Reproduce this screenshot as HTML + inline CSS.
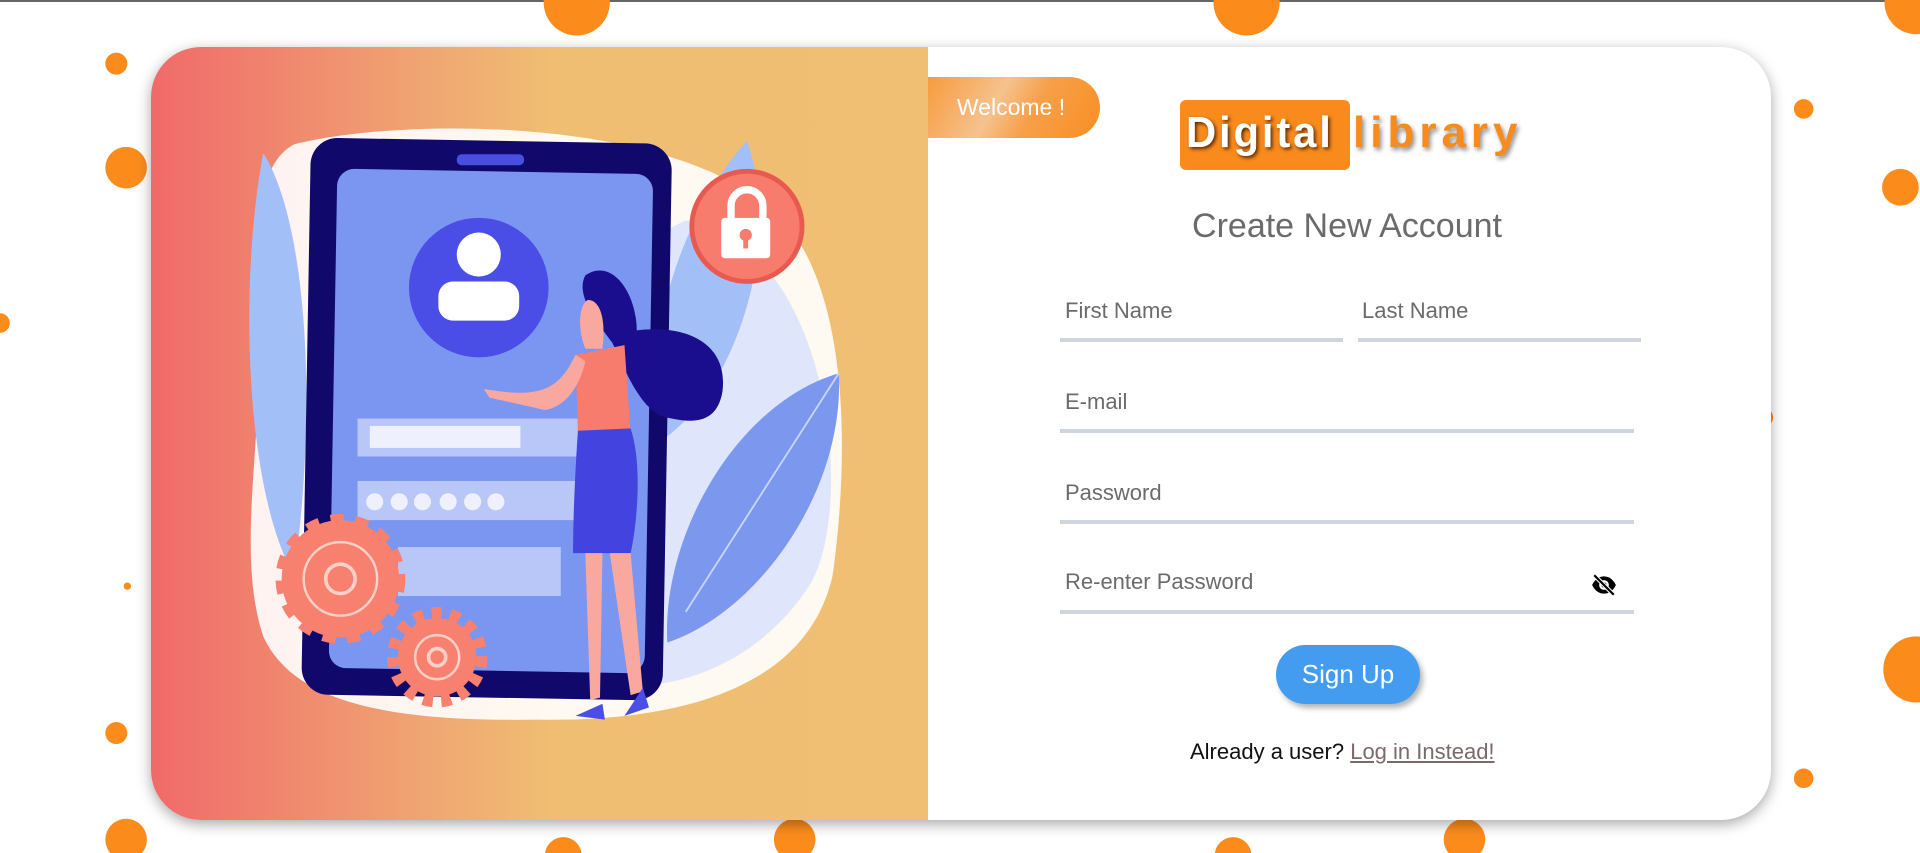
<!DOCTYPE html>
<html><head><meta charset="utf-8"><style>
*{margin:0;padding:0;box-sizing:border-box}
body{width:1920px;height:853px;overflow:hidden;background:#fff;position:relative;font-family:"Liberation Sans",sans-serif}
.full{position:absolute;left:0;top:0;width:1920px;height:853px}
.topline{position:absolute;left:0;top:0;width:1920px;height:2px;background:#666}
.card{position:absolute;left:151px;top:47px;width:1620px;height:773px;border-radius:50px;overflow:hidden;background:#fff;box-shadow:0 4px 14px rgba(0,0,0,.35)}
.left{position:absolute;left:0;top:0;width:777px;height:100%;background:linear-gradient(90deg,#f06a6a 0%,#f0a572 35%,#f0be72 52%,#f0bf73 100%)}
.welcome{position:absolute;left:928px;top:77px;width:172px;height:61px;border-radius:0 31px 31px 0;background:linear-gradient(120deg,#f89b3d 0%,#f5c28e 40%,#f7a04a 60%,#f88e22 100%);color:#fff;font-size:23px;line-height:61px;text-align:center;padding-right:6px}
.logo{position:absolute;left:1180px;top:100px;width:170px;height:70px;border-radius:6px;background:#f98a1c}
.t{position:absolute;white-space:nowrap}
.lbl{font-size:22px;color:#6b6b6b}
.line{position:absolute;height:4px;background:#cfd5dc}
.btn{position:absolute;left:1276px;top:645px;width:144px;height:59px;border-radius:30px;background:#439cf0;color:#fff;font-size:26px;line-height:59px;text-align:center;box-shadow:3px 4px 6px rgba(0,0,0,.3)}
</style></head><body>
<div class="topline"></div>
<svg class="full" viewBox="0 0 1568 697" preserveAspectRatio="none">
<g fill="#fb8c1c">
<circle cx="471" cy="2" r="27"/><circle cx="1018" cy="2" r="27"/><circle cx="1565" cy="2" r="26"/>
<circle cx="95" cy="52" r="9"/><circle cx="103" cy="137" r="17"/><circle cx="1473" cy="89" r="8"/>
<circle cx="1552" cy="153" r="15"/><circle cx="0" cy="264" r="8"/><circle cx="1440" cy="341" r="8"/>
<circle cx="104" cy="479" r="3"/><circle cx="95" cy="599" r="9"/><circle cx="1565" cy="547" r="27"/>
<circle cx="1473" cy="636" r="8"/><circle cx="103" cy="686" r="17"/><circle cx="460" cy="699" r="15"/>
<circle cx="649" cy="686" r="17"/><circle cx="1007" cy="699" r="15"/><circle cx="1196" cy="686" r="17"/>
</g></svg>
<div class="card"><div class="left"></div></div>
<svg class="full" viewBox="0 0 1568 697" preserveAspectRatio="none">
<path d="M240 118 C330 95 560 95 640 180 C700 250 690 400 680 470 C660 560 560 590 440 588 C320 590 240 575 215 520 C195 460 210 380 212 300 C214 220 200 140 240 118Z" fill="#fff" opacity=".9"/>
<path d="M560 180 C680 200 700 420 660 480 C620 540 560 560 520 560 L520 200Z" fill="#dfe6fb"/>
<path d="M215 125 C250 180 260 330 240 470 C200 400 195 230 215 125Z" fill="#a3bff8"/>
<path d="M610 115 C640 200 600 320 540 360 C520 280 560 170 610 115Z" fill="#a3bff8"/>
<path d="M685 305 C690 400 620 500 545 525 C540 440 600 330 685 305Z" fill="#7c97ee"/>
<path d="M685 305 L560 500" stroke="#c9d5fb" stroke-width="1.5"/>
<rect x="250" y="115" width="295" height="455" rx="22" fill="#10086b" transform="rotate(1 400 340)"/>
<rect x="272" y="140" width="258" height="408" rx="14" fill="#7b96f0" transform="rotate(1 400 340)"/>
<rect x="373" y="126" width="55" height="9" rx="4" fill="#4a4ee0"/>
<circle cx="391" cy="235" r="57" fill="#4a4de6"/>
<circle cx="391" cy="208" r="18" fill="#fff"/>
<rect x="358" y="230" width="66" height="32" rx="12" fill="#fff"/>
<rect x="292" y="342" width="183" height="31" fill="#b8c6f8"/>
<rect x="302" y="348" width="123" height="18" fill="#eef1fd"/>
<rect x="292" y="393" width="183" height="32" fill="#b8c6f8"/>
<g fill="#eef1fd"><circle cx="306" cy="410" r="7"/><circle cx="326" cy="410" r="7"/><circle cx="345" cy="410" r="7"/><circle cx="366" cy="410" r="7"/><circle cx="386" cy="410" r="7"/><circle cx="405" cy="410" r="7"/></g>
<rect x="325" y="447" width="133" height="40" fill="#b8c6f8"/>
<circle cx="610" cy="185" r="45" fill="#f87c6d" stroke="#e85a50" stroke-width="4"/>
<path d="M597 180 V168 a13 13 0 0 1 26 0 V180" fill="none" stroke="#fff" stroke-width="6"/>
<rect x="589" y="178" width="40" height="33" rx="3" fill="#fff"/>
<circle cx="609" cy="192" r="5" fill="#f87c6d"/><rect x="607" y="193" width="4" height="10" fill="#f87c6d"/>
<g fill="#f8806e" stroke="#f8806e" stroke-width="14" stroke-dasharray="10 9"><circle cx="278" cy="473" r="46"/></g>
<circle cx="278" cy="473" r="48" fill="#f8806e"/>
<circle cx="278" cy="473" r="30" fill="none" stroke="#fbd0c8" stroke-width="2"/>
<circle cx="278" cy="473" r="12" fill="none" stroke="#fbd0c8" stroke-width="3"/>
<circle cx="357" cy="537" r="36" fill="none" stroke="#f8806e" stroke-width="10" stroke-dasharray="8 7"/>
<circle cx="357" cy="537" r="32" fill="#f8806e"/>
<circle cx="357" cy="537" r="18" fill="none" stroke="#fbd0c8" stroke-width="2"/>
<circle cx="357" cy="537" r="7" fill="none" stroke="#fbd0c8" stroke-width="3"/>
<path d="M478 225 C500 210 520 240 520 270 C560 265 595 280 590 320 C585 350 560 345 540 340 C520 330 510 300 500 280 C485 260 470 240 478 225Z" fill="#1a0e8f"/>
<path d="M480 245 C490 245 495 260 492 285 L478 285 C472 270 472 250 480 245Z" fill="#f9a8a0"/>
<path d="M470 290 L510 282 L515 355 L472 355Z" fill="#f87c6d"/>
<path d="M470 290 C460 310 450 325 410 320 L395 318 L400 325 L445 335 C465 332 475 310 478 295Z" fill="#f9a8a0"/>
<path d="M472 352 L515 350 C525 380 520 430 515 452 L468 452 C468 420 470 380 472 352Z" fill="#4343e0"/>
<path d="M478 452 L492 452 L490 570 L482 572Z" fill="#f9a8a0"/>
<path d="M498 452 L515 452 L525 565 L515 568Z" fill="#f9a8a0"/>
<path d="M470 585 L492 575 L494 588 Z M510 585 L525 562 L530 578 Z" fill="#4a4de6"/>
</svg>
<div class="welcome">Welcome !</div>
<div class="logo"></div>
<div class="t" style="left:1186px;top:108px;font-size:44px;font-weight:bold;color:#fff;text-shadow:2px 2px 4px #5a2a00;letter-spacing:3px;transform:scaleX(.95);transform-origin:left">Digital</div>
<div class="t" style="left:1353px;top:108px;font-size:44px;font-weight:bold;color:#f98a1c;text-shadow:2px 3px 5px rgba(0,0,0,.45);letter-spacing:5px">library</div>
<div class="t" style="left:1190px;top:207px;width:314px;text-align:center;font-size:34px;color:#6b6b6b">Create New Account</div>
<div class="t lbl" style="left:1065px;top:298px">First Name</div>
<div class="t lbl" style="left:1362px;top:298px">Last Name</div>
<div class="line" style="left:1060px;top:338px;width:283px"></div>
<div class="line" style="left:1358px;top:338px;width:283px"></div>
<div class="t lbl" style="left:1065px;top:389px">E-mail</div>
<div class="line" style="left:1060px;top:429px;width:574px"></div>
<div class="t lbl" style="left:1065px;top:480px">Password</div>
<div class="line" style="left:1060px;top:520px;width:574px"></div>
<div class="t lbl" style="left:1065px;top:569px">Re-enter Password</div>
<div class="line" style="left:1060px;top:610px;width:574px"></div>
<svg style="position:absolute;left:1589px;top:572px" width="30" height="26" viewBox="0 0 24 24"><path d="M1 12 C4 6 8 4 12 4 C16 4 20 6 23 12 C20 18 16 20 12 20 C8 20 4 18 1 12Z" fill="#000"/><circle cx="12" cy="12" r="4.5" fill="#fff"/><circle cx="12" cy="12" r="2.5" fill="#000"/><path d="M3 3 L21 21" stroke="#fff" stroke-width="4"/><path d="M3 3 L21 21" stroke="#000" stroke-width="2"/></svg>
<div class="btn">Sign Up</div>
<div class="t" style="left:1190px;top:739px;font-size:22px;color:#111">Already a user? <span style="color:#7a6a6a;text-decoration:underline">Log in Instead!</span></div>
</body></html>
